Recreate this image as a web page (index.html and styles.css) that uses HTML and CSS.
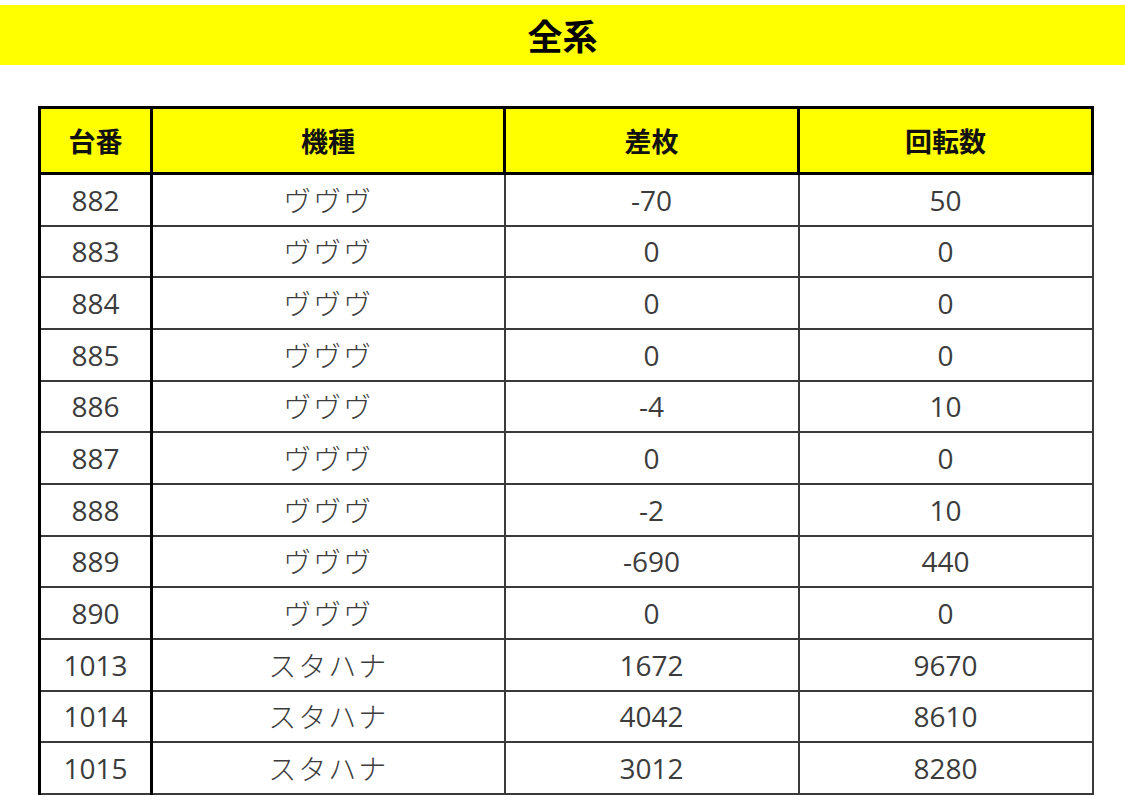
FILE: index.html
```html
<!DOCTYPE html>
<html lang="ja">
<head>
<meta charset="utf-8">
<title>全系</title>
<link rel="stylesheet" href="styles.css">
</head>
<body>
<h1 class="banner">全系</h1>
<table class="data">
  <colgroup>
    <col class="c1"><col class="c2"><col class="c3"><col class="c4">
  </colgroup>
  <thead>
    <tr><th>台番</th><th>機種</th><th>差枚</th><th>回転数</th></tr>
  </thead>
  <tbody>
    <tr><td>882</td><td>ヴヴヴ</td><td>-70</td><td>50</td></tr>
    <tr><td>883</td><td>ヴヴヴ</td><td>0</td><td>0</td></tr>
    <tr><td>884</td><td>ヴヴヴ</td><td>0</td><td>0</td></tr>
    <tr><td>885</td><td>ヴヴヴ</td><td>0</td><td>0</td></tr>
    <tr><td>886</td><td>ヴヴヴ</td><td>-4</td><td>10</td></tr>
    <tr><td>887</td><td>ヴヴヴ</td><td>0</td><td>0</td></tr>
    <tr><td>888</td><td>ヴヴヴ</td><td>-2</td><td>10</td></tr>
    <tr><td>889</td><td>ヴヴヴ</td><td>-690</td><td>440</td></tr>
    <tr><td>890</td><td>ヴヴヴ</td><td>0</td><td>0</td></tr>
    <tr><td>1013</td><td>スタハナ</td><td>1672</td><td>9670</td></tr>
    <tr><td>1014</td><td>スタハナ</td><td>4042</td><td>8610</td></tr>
    <tr><td>1015</td><td>スタハナ</td><td>3012</td><td>8280</td></tr>
  </tbody>
</table>
</body>
</html>
```

FILE: styles.css
```css
html, body {
  margin: 0;
  padding: 0;
  background: #ffffff;
}
body {
  padding-top: 5px;
  font-family: "Noto Sans CJK JP", "Noto Sans", sans-serif;
  overflow: hidden;
}
.banner {
  margin: 0;
  height: 60px;
  line-height: 60px;
  background: #ffff00;
  color: #000;
  text-align: center;
  font-size: 35px;
  font-weight: 700;
}
.data {
  margin: 41px 0 0 38px;
  width: 1053px;
  border-collapse: collapse;
  table-layout: fixed;
}
.c1 { width: 112px; }
.c2 { width: 353px; }
.c3 { width: 294px; }
.c4 { width: 294px; }
.data th {
  height: 63px;
  padding: 0;
  background: #ffff00;
  border: 3px solid #000;
  color: #111;
  font-size: 27px;
  font-weight: 700;
  text-align: center;
}
.data td {
  height: 49.67px;
  padding: 0;
  border: 2px solid #3a3a3a;
  color: #3c3c3c;
  font-family: "Open Sans", "Noto Sans CJK JP", sans-serif;
  font-size: 28px;
  font-weight: 400;
  text-align: center;
  line-height: 1;
}
.data td:nth-child(2) {
  font-family: "Noto Sans CJK JP", sans-serif;
  font-weight: 300;
  letter-spacing: 2px;
}
.data td:first-child {
  border-left: 3px solid #000;
  border-right: 3px solid #000;
}
```
